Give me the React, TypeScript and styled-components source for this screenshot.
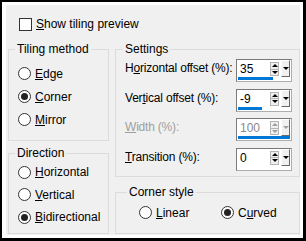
import styled, { createGlobalStyle } from 'styled-components'

const GlobalStyle = createGlobalStyle`
  body {
    margin: 0;
    background: #fff;
    font-family: 'Liberation Sans', Arial, sans-serif;
    font-size: 12px;
    color: #000;
  }
`

const Frame = styled.div`
  width: 306px;
  height: 241px;
  box-sizing: border-box;
  border-style: solid;
  border-color: #000;
  border-width: 2px 3px 3px 2px;
  padding: 3px 3px 3px 4px;
  background: #fff;
`

const Panel = styled.div`
  height: 100%;
  box-sizing: border-box;
  background: #f0f0f0;
  padding: 6px 0 0 2px;
  display: flex;
  flex-direction: column;
  gap: 5px;
`

const CheckRow = styled.label`
  height: 26px;
  display: flex;
  align-items: center;
  gap: 4px;
  padding-left: 11px;
`

const CheckBox = styled.span`
  width: 13px;
  height: 13px;
  box-sizing: border-box;
  border: 1px solid #333;
  background: #fff;
`

const Columns = styled.div`
  display: grid;
  grid-template-columns: 101px 185px;
  column-gap: 6px;
`

const Column = styled.div<{ $gap: number }>`
  display: flex;
  flex-direction: column;
  gap: ${p => p.$gap}px;
`

const Group = styled.fieldset<{ $h: number; $pt: number; $pl: number }>`
  margin: 0;
  min-width: 0;
  box-sizing: border-box;
  height: ${p => p.$h}px;
  border: 1px solid #dcdcdc;
  padding: ${p => p.$pt}px 0 0 ${p => p.$pl}px;
`

const Legend = styled.legend<{ $ml: number }>`
  padding: 0 2px;
  margin-left: ${p => p.$ml}px;
  line-height: 14px;
`

const RadioRow = styled.label<{ $h: number }>`
  height: ${p => p.$h}px;
  display: flex;
  align-items: center;
  gap: 4px;
`

const RadioCircle = styled.span<{ $on?: boolean }>`
  width: 13px;
  height: 13px;
  box-sizing: border-box;
  border: 1px solid #333;
  border-radius: 50%;
  background: #fff;
  display: flex;
  align-items: center;
  justify-content: center;
  flex: none;

  &::after {
    content: '';
    display: ${p => (p.$on ? 'block' : 'none')};
    width: 7px;
    height: 7px;
    border-radius: 50%;
    background: #222;
  }
`

const Key = styled.u`
  text-underline-offset: 1px;
`

const SettingsGrid = styled.div`
  display: grid;
  grid-template-columns: 111px 56px;
  grid-auto-rows: 23px;
  row-gap: 6.5px;
`

const Label = styled.span<{ $disabled?: boolean }>`
  line-height: 18px;
  white-space: nowrap;
  letter-spacing: -0.2px;
  color: ${p => (p.$disabled ? '#a0a0a0' : '#000')};
`

const Box = styled.div`
  width: 56px;
  height: 23px;
  box-sizing: border-box;
  border: 1px solid #adadad;
  border-top-color: #7a7a7a;
  border-left-color: #7a7a7a;
  background: #fff;
  display: flex;
  flex-direction: column;
`

const BoxTop = styled.div`
  height: 17px;
  display: flex;
  align-items: flex-start;
`

const Value = styled.span<{ $disabled?: boolean }>`
  flex: 1;
  padding-left: 3px;
  line-height: 18px;
  color: ${p => (p.$disabled ? '#8a8a8a' : '#000')};
`

const Spin = styled.div`
  width: 9px;
  height: 14px;
  margin-top: 2px;
  box-sizing: border-box;
  border: 1px solid #b4b4b4;
  background: #f0f0f0;
  display: flex;
  flex-direction: column;
`

const SpinHalf = styled.div<{ $down?: boolean }>`
  flex: 1;
  display: flex;
  align-items: center;
  justify-content: center;
  border-top: ${p => (p.$down ? '1px solid #b4b4b4' : 'none')};
`

const Arrow = styled.span<{ $down?: boolean; $disabled?: boolean }>`
  width: 0;
  height: 0;
  border-left: 3px solid transparent;
  border-right: 3px solid transparent;
  ${p => (p.$down ? 'border-top' : 'border-bottom')}: 3px solid ${p => (p.$disabled ? '#a0a0a0' : '#000')};
`

const Drop = styled.div`
  width: 9px;
  height: 17px;
  margin: 0 1px 0 2px;
  box-sizing: border-box;
  border-style: solid;
  border-width: 1px;
  border-color: #fff #696969 #696969 #fff;
  background: #f0f0f0;
  display: flex;
  align-items: center;
  justify-content: center;
`

const Track = styled.div`
  height: 3px;
  margin: 0 1px 1px 1px;
`

const Fill = styled.div`
  height: 100%;
  background: #0078d7;
`

const CornerRow = styled.div`
  display: grid;
  grid-template-columns: 82px 82px;
`

type SpinProps = { value: number; min: number; max: number; disabled?: boolean }

const SpinBox = ({ value, min, max, disabled }: SpinProps) => {
  const pct = ((value - min) / (max - min)) * 100
  return (
    <Box>
      <BoxTop>
        <Value $disabled={disabled}>{value}</Value>
        <Spin>
          <SpinHalf>
            <Arrow $disabled={disabled} />
          </SpinHalf>
          <SpinHalf $down>
            <Arrow $down $disabled={disabled} />
          </SpinHalf>
        </Spin>
        <Drop>
          <Arrow $down $disabled={disabled} />
        </Drop>
      </BoxTop>
      <Track>
        <Fill style={{ width: `${pct}%` }} />
      </Track>
    </Box>
  )
}

const Radio = ({ on, h, children }: { on?: boolean; h: number; children: React.ReactNode }) => (
  <RadioRow $h={h}>
    <RadioCircle $on={on} />
    <span>{children}</span>
  </RadioRow>
)

export default function App() {
  return (
    <>
      <GlobalStyle />
      <Frame>
        <Panel>
          <CheckRow>
            <CheckBox />
            <span>
              <Key>S</Key>how tiling preview
            </span>
          </CheckRow>

          <Columns>
            <Column $gap={5}>
              <Group $h={99} $pt={6} $pl={9}>
                <Legend $ml={-3}>Tiling method</Legend>
                <Radio h={23}>
                  <Key>E</Key>dge
                </Radio>
                <Radio h={23} on>
                  <Key>C</Key>orner
                </Radio>
                <Radio h={23}>
                  <Key>M</Key>irror
                </Radio>
              </Group>
              <Group $h={88} $pt={1} $pl={9}>
                <Legend $ml={-3}>Direction</Legend>
                <Radio h={22.5}>
                  <Key>H</Key>orizontal
                </Radio>
                <Radio h={22.5}>
                  <Key>V</Key>ertical
                </Radio>
                <Radio h={22.5} on>
                  <Key>B</Key>idirectional
                </Radio>
              </Group>
            </Column>

            <Column $gap={8}>
              <Group $h={135} $pt={3} $pl={9}>
                <Legend $ml={-2}>Settings</Legend>
                <SettingsGrid>
                  <Label>
                    H<Key>o</Key>rizontal offset (%):
                  </Label>
                  <SpinBox value={35} min={-100} max={100} />
                  <Label>
                    Ver<Key>t</Key>ical offset (%):
                  </Label>
                  <SpinBox value={-9} min={-100} max={100} />
                  <Label $disabled>
                    <Key>W</Key>idth (%):
                  </Label>
                  <SpinBox value={100} min={0} max={100} disabled />
                  <Label>
                    <Key>T</Key>ransition (%):
                  </Label>
                  <SpinBox value={0} min={0} max={100} />
                </SettingsGrid>
              </Group>
              <Group $h={49} $pt={2} $pl={23}>
                <Legend $ml={-12}>Corner style</Legend>
                <CornerRow>
                  <Radio h={23}>
                    <Key>L</Key>inear
                  </Radio>
                  <Radio h={23} on>
                    C<Key>u</Key>rved
                  </Radio>
                </CornerRow>
              </Group>
            </Column>
          </Columns>
        </Panel>
      </Frame>
    </>
  )
}
